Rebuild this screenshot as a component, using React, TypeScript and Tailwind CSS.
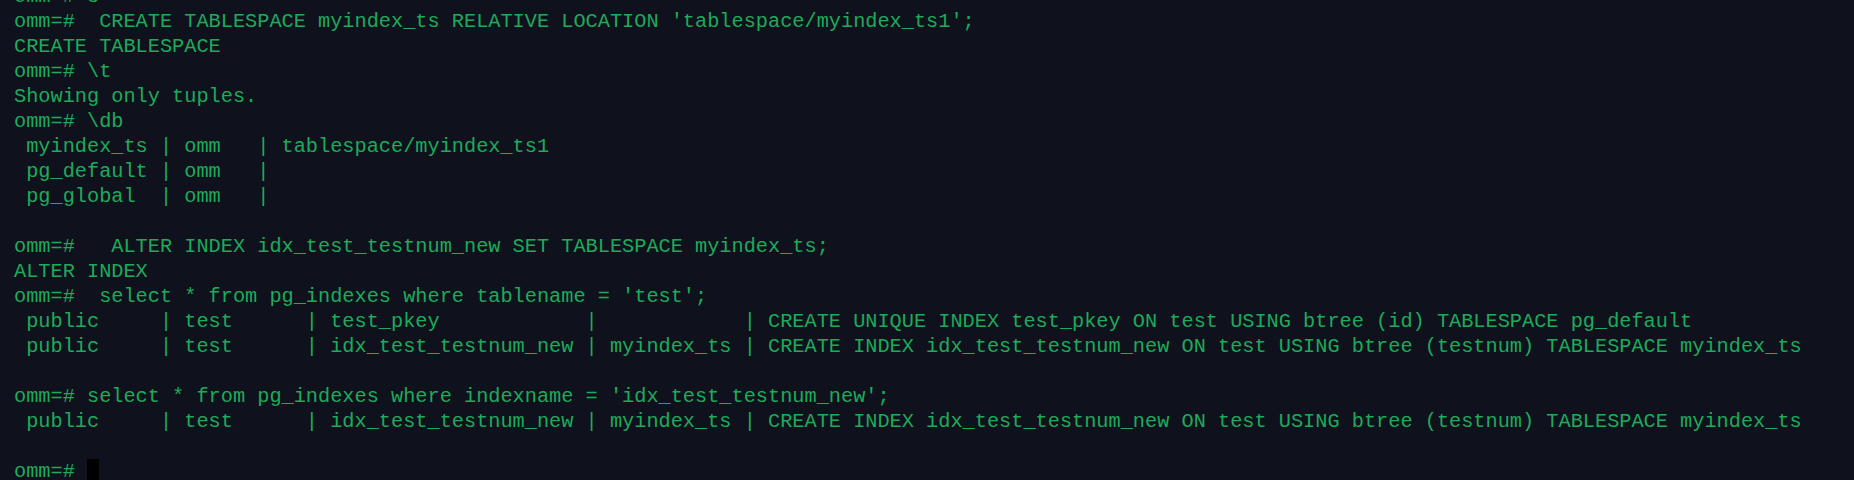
import React from "react";

const lines: string[] = [
  "omm=# s",
  "omm=#  CREATE TABLESPACE myindex_ts RELATIVE LOCATION 'tablespace/myindex_ts1';",
  "CREATE TABLESPACE",
  "omm=# \\t",
  "Showing only tuples.",
  "omm=# \\db",
  " myindex_ts | omm   | tablespace/myindex_ts1",
  " pg_default | omm   |",
  " pg_global  | omm   |",
  "",
  "omm=#   ALTER INDEX idx_test_testnum_new SET TABLESPACE myindex_ts;",
  "ALTER INDEX",
  "omm=#  select * from pg_indexes where tablename = 'test';",
  " public     | test      | test_pkey            |            | CREATE UNIQUE INDEX test_pkey ON test USING btree (id) TABLESPACE pg_default",
  " public     | test      | idx_test_testnum_new | myindex_ts | CREATE INDEX idx_test_testnum_new ON test USING btree (testnum) TABLESPACE myindex_ts",
  "",
  "omm=# select * from pg_indexes where indexname = 'idx_test_testnum_new';",
  " public     | test      | idx_test_testnum_new | myindex_ts | CREATE INDEX idx_test_testnum_new ON test USING btree (testnum) TABLESPACE myindex_ts",
  "",
];

export default function App() {
  return (
    <div className="w-[1854px] h-[480px] overflow-hidden bg-[#0f111d]">
      <div
        className="mt-[-16px] pl-[14px] text-[#1cab5a] text-[20.28px] leading-[25px] whitespace-pre"
        style={{ fontFamily: '"Liberation Mono", "Courier New", monospace' }}
      >
        {lines.map((l, i) => (
          <div key={i} className="h-[25px]">
            {l}
          </div>
        ))}
        <div className="h-[25px] flex items-stretch">
          <span>omm=# </span>
          <span className="w-[12px] bg-black" />
        </div>
      </div>
    </div>
  );
}
